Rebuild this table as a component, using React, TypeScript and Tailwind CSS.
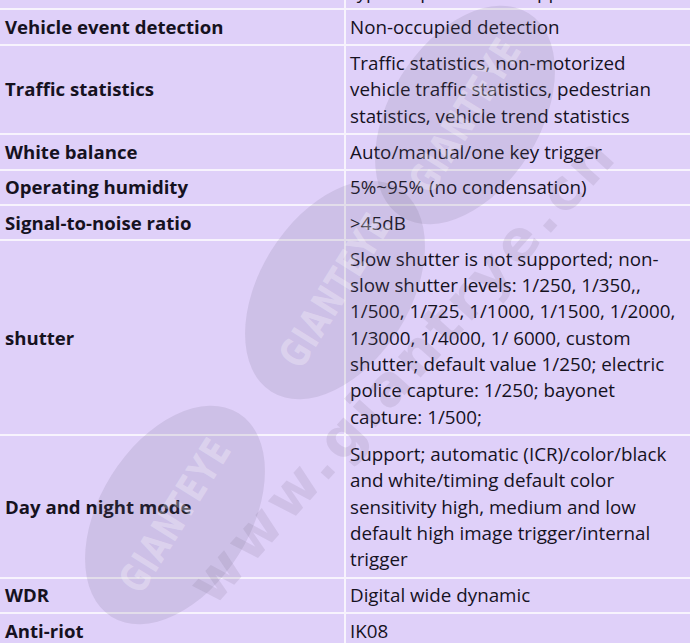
import React from "react";

const rows: { k: string; v: string; tall?: boolean }[] = [
  { k: "", v: "typical speed of the upper limit" },
  { k: "Vehicle event detection", v: "Non-occupied detection" },
  {
    k: "Traffic statistics",
    v: "Traffic statistics, non-motorized vehicle traffic statistics, pedestrian statistics, vehicle trend statistics",
    tall: true,
  },
  { k: "White balance", v: "Auto/manual/one key trigger" },
  { k: "Operating humidity", v: "5%~95% (no condensation)" },
  { k: "Signal-to-noise ratio", v: ">45dB" },
  {
    k: "shutter",
    v: "Slow shutter is not supported; non-slow shutter levels: 1/250, 1/350,, 1/500, 1/725, 1/1000, 1/1500, 1/2000, 1/3000, 1/4000, 1/ 6000, custom shutter; default value 1/250; electric police capture: 1/250; bayonet capture: 1/500;",
    tall: true,
  },
  {
    k: "Day and night mode",
    v: "Support; automatic (ICR)/color/black and white/timing default color sensitivity high, medium and low default high image trigger/internal trigger",
    tall: true,
  },
  { k: "WDR", v: "Digital wide dynamic" },
  { k: "Anti-riot", v: "IK08" },
];

function Logo({ className }: { className: string }) {
  return (
    <div
      className={
        "absolute w-[240px] h-[150px] rounded-[50%] bg-[rgba(110,100,125,0.15)] flex items-center justify-center " +
        className
      }
    >
      <span className="text-[40px] font-bold tracking-[2px] text-[rgba(255,255,255,0.3)] [font-family:'Liberation_Sans_Narrow','DejaVu_Sans_Condensed',sans-serif] scale-x-[0.8]">
        GIANTEYE
      </span>
    </div>
  );
}

export default function App() {
  return (
    <div className="relative w-[690px] h-[643px] overflow-hidden bg-[#f7f3fd] [font-family:'Open_Sans',sans-serif] text-[#16121f]">
      <div className="-mt-[25px] flex flex-col gap-[2px]">
        {rows.map((r, i) => (
          <div key={i} className="grid grid-cols-[344px_344px] gap-[2px]">
            <div
              className={
                "bg-[#dfd0f9] flex items-center pl-[5px] pr-[4px] text-[18.6px] leading-[26.3px] font-bold " +
                (r.tall ? "py-[4.5px]" : "py-[3.5px]")
              }
            >
              {r.k}
            </div>
            <div
              className={
                "bg-[#dfd0f9] pl-[4px] pr-[2px] text-[18.8px] leading-[26.3px] " +
                (r.tall ? "py-[4.5px]" : "py-[3.5px]")
              }
            >
              {r.v}
            </div>
          </div>
        ))}
      </div>
      <div className="pointer-events-none absolute inset-0">
        <Logo className="left-[345px] top-[40px] -rotate-[58deg]" />
        <Logo className="left-[215px] top-[215px] -rotate-[58deg]" />
        <Logo className="left-[55px] top-[440px] -rotate-[58deg]" />
        <div className="absolute left-[100px] top-[330px] w-[600px] text-center -rotate-[48deg] text-[56px] font-bold tracking-[5px] text-[rgba(110,100,125,0.14)] [font-family:'DejaVu_Sans',sans-serif]">
          www.giantrye.cn
        </div>
      </div>
    </div>
  );
}
